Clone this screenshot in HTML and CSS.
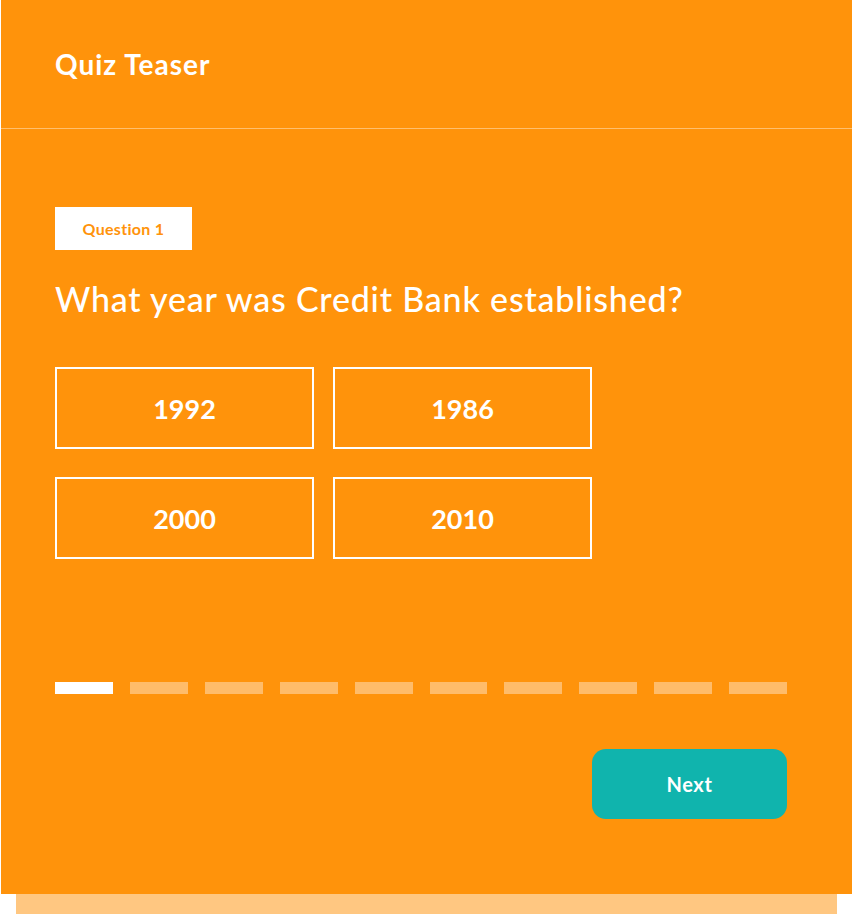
FILE: index.html
```html
<!DOCTYPE html>
<html lang="en">
<head>
<meta charset="utf-8">
<title>Quiz Teaser</title>
<link rel="stylesheet" href="styles.css">
</head>
<body>
<div class="wrap">
  <section class="card">
    <header class="card-header">
      <h1 class="title">Quiz Teaser</h1>
    </header>
    <div class="card-body">
      <div class="tag">Question 1</div>
      <h2 class="question">What year was Credit Bank established?</h2>
      <div class="answers">
        <button class="answer">1992</button>
        <button class="answer">1986</button>
        <button class="answer">2000</button>
        <button class="answer">2010</button>
      </div>
      <div class="progress">
        <span class="step active"></span>
        <span class="step"></span>
        <span class="step"></span>
        <span class="step"></span>
        <span class="step"></span>
        <span class="step"></span>
        <span class="step"></span>
        <span class="step"></span>
        <span class="step"></span>
        <span class="step"></span>
      </div>
      <div class="actions">
        <button class="next">Next</button>
      </div>
    </div>
  </section>
  <div class="shadow-strip"></div>
</div>
</body>
</html>
```
FILE: styles.css
```css
* { box-sizing: border-box; }
html, body { margin: 0; padding: 0; background: #ffffff; }
body { font-family: "Lato", "Noto Sans", sans-serif; overflow: hidden; }
.wrap { padding-left: 1px; }
.card { background: #ff930b; color: #ffffff; height: 894px; }
.card-header { height: 129px; border-bottom: 1px solid #ffbf6e; padding: 0 54px; display: flex; align-items: center; }
.title { margin: 0; font-size: 28px; font-weight: 700; line-height: 32px; letter-spacing: 1px; padding-bottom: 1px; }
.card-body { padding: 78px 54px 0 54px; }
.tag { display: inline-flex; align-items: center; justify-content: center; width: 137px; height: 43px; background: #ffffff; color: #ff930b; font-size: 16px; font-weight: 700; letter-spacing: 0.3px; }
.question { margin: 29px 0 0 0; font-size: 34px; font-weight: 500; line-height: 40px; letter-spacing: 0.8px; }
.answers { margin-top: 48px; display: grid; grid-template-columns: 259px 259px; column-gap: 19px; row-gap: 28px; }
.answer { height: 82px; background: transparent; border: 2px solid #ffffff; color: #ffffff; font-family: inherit; font-size: 27px; font-weight: 700; padding: 0 0 0 0; }
.progress { margin-top: 123px; display: flex; gap: 17px; width: 732px; }
.step { flex: 1; height: 12px; background: #ffbc6a; }
.step.active { background: #ffffff; }
.actions { margin-top: 55px; width: 732px; display: flex; justify-content: flex-end; }
.next { width: 195px; height: 70px; border: none; border-radius: 14px; background: #10b4ad; color: #ffffff; font-family: inherit; font-size: 20px; font-weight: 700; letter-spacing: 0.6px; }
.shadow-strip { margin: 0 15px 0 15px; height: 20px; background: #ffc781; }
```
